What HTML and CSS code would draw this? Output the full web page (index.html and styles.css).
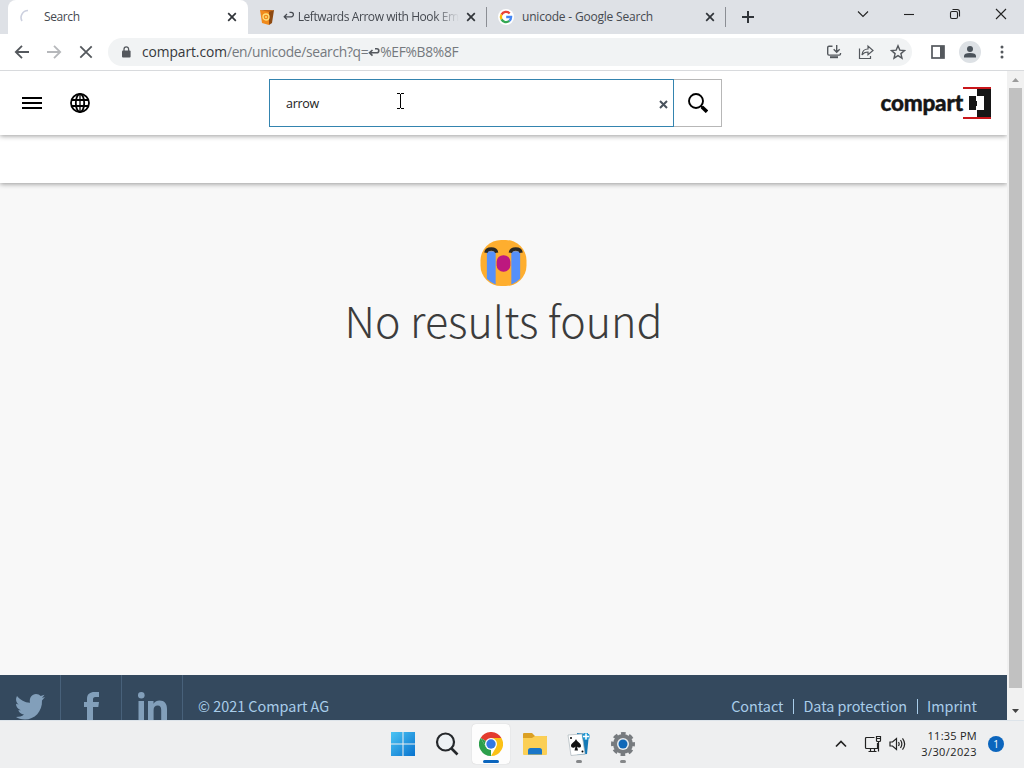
FILE: index.html
```html
<!DOCTYPE html>
<html lang="en">
<head>
    <meta charset="UTF-8">
    <meta name="viewport" content="width=device-width, initial-scale=1.0">
    <title>Search</title>
    <link rel="stylesheet" href="styles.css">
</head>
<body>
    <div class="tab-strip">
        <div class="tab active">
            <svg class="favicon" width="16" height="16" viewBox="0 0 16 16"><path d="M2 12A7 7 0 0 1 8 1.5" fill="none" stroke="#ccd0df" stroke-width="1.6"/></svg>
            <span class="tab-title">Search</span>
            <svg class="tab-close" width="10" height="10" viewBox="0 0 10 10"><path d="M1.2 1.2l7.6 7.6M8.8 1.2L1.2 8.8"/></svg>
        </div>
        <div class="tab second">
            <svg class="favicon" width="16" height="17" viewBox="0 0 16 17"><path d="M1 1l9 1v14l-7-2z" fill="#f08a1c"/><path d="M10 2l5-1-2 13-3 2z" fill="#8e4a12"/><path d="M1 1l14 0-5 2z" fill="#c86a18"/><circle cx="7" cy="8" r="3" fill="none" stroke="#ffe07a" stroke-width="1.3"/><circle cx="7" cy="8" r="1" fill="#ffe07a"/></svg>
            <span class="tab-title fade"><svg width="12" height="10" viewBox="0 0 12 10"><path d="M4 3L1.2 5.8 4 8.5M1.5 5.8h6.7a2.2 2.2 0 0 0 0-4.4H6.5" fill="none" stroke="#454950" stroke-width="1.2"/></svg> Leftwards Arrow with Hook Em</span>
            <svg class="tab-close" width="10" height="10" viewBox="0 0 10 10"><path d="M1.2 1.2l7.6 7.6M8.8 1.2L1.2 8.8"/></svg>
        </div>
        <div class="tab third">
            <svg class="favicon" width="16" height="16" viewBox="0 0 16 16"><circle cx="8" cy="8" r="8" fill="#fff"/><g fill="none" stroke-width="2.3"><path d="M11.7 4.4A5.1 5.1 0 0 0 3.5 5.6" stroke="#ea4335"/><path d="M3.5 5.6a5.1 5.1 0 0 0 0 4.8" stroke="#fbbc05"/><path d="M3.5 10.4a5.1 5.1 0 0 0 7.8 1.5" stroke="#34a853"/><path d="M11.3 11.9A5.1 5.1 0 0 0 13.1 8H8.2" stroke="#4285f4"/></g></svg>
            <span class="tab-title">unicode - Google Search</span>
            <svg class="tab-close" width="10" height="10" viewBox="0 0 10 10"><path d="M1.2 1.2l7.6 7.6M8.8 1.2L1.2 8.8"/></svg>
        </div>
        <svg class="new-tab" width="12" height="12" viewBox="0 0 12 12"><path d="M6 0v12M0 6h12"/></svg>
        <div class="window-controls">
            <svg width="12" height="12" viewBox="0 0 12 12"><path d="M1 3.5l5 5 5-5"/></svg>
            <svg width="12" height="12" viewBox="0 0 12 12"><path d="M1 6.5h10"/></svg>
            <svg width="12" height="12" viewBox="0 0 12 12"><rect x="1.5" y="3.5" width="7" height="7" rx="1.5"/><path d="M3.5 1.5h4.7a2.3 2.3 0 0 1 2.3 2.3v4.7"/></svg>
            <svg width="12" height="12" viewBox="0 0 12 12"><path d="M1 1l10 10M11 1L1 11"/></svg>
        </div>
    </div>

    <div class="toolbar">
        <div class="nav-buttons">
            <svg width="16" height="16" viewBox="0 0 16 16"><path d="M15 8H2M8 1.8L1.8 8 8 14.2"/></svg>
            <svg class="disabled" width="16" height="16" viewBox="0 0 16 16"><path d="M1 8h13M8 1.8L14.2 8 8 14.2"/></svg>
            <svg width="16" height="16" viewBox="0 0 16 16"><path d="M2.3 2.3l11.4 11.4M13.7 2.3L2.3 13.7"/></svg>
        </div>
        <div class="address-bar">
            <svg class="lock" width="10" height="12" viewBox="0 0 10 12"><rect x="1" y="4.5" width="8.6" height="7" rx="1" fill="#54585d"/><path d="M3 5V3.2a2.3 2.3 0 0 1 4.6 0V5" fill="none" stroke="#54585d" stroke-width="1.3"/></svg>
            <span class="url"><b>compart.com</b>/en/unicode/search?q=<svg width="12" height="10" viewBox="0 0 12 10"><path d="M4.5 3L1.5 5.8l3 2.8M1.8 5.8h7a2 2 0 0 0 0-4H7" fill="none" stroke="#55595e" stroke-width="1.6"/></svg>%EF%B8%8F</span>
            <div class="page-actions">
                <svg width="16" height="16" viewBox="0 0 16 16"><path d="M6.5 2.2H3Q1.7 2.2 1.7 3.5v6.3q0 1.3 1.3 1.3h10.3q1.2 0 1.2-1.3V9M10.7 1v7M7.7 5.3l3 3 3-3"/><path d="M4 13.2h8" stroke-width="2"/></svg>
                <svg width="16" height="16" viewBox="0 0 16 16"><path d="M1.5 4.5v10h11V12M4 11c.3-4 2.5-6 6-6V2l5 4.5-5 4.3V8C7.5 8 5.5 8.7 4 11z" stroke-width="1.2"/></svg>
                <svg width="16" height="16" viewBox="0 0 16 16"><path d="M8 1.8l1.8 4.3 4.7.4-3.6 3.1 1.1 4.6-4-2.5-4 2.5 1.1-4.6-3.6-3.1 4.7-.4z"/></svg>
            </div>
        </div>
        <svg class="side-panel" width="14" height="14" viewBox="0 0 14 14"><rect x="1" y="1" width="12" height="12" fill="none" stroke="#54585d" stroke-width="1.7"/><path d="M9 1h4v12H9z" fill="#54585d"/></svg>
        <svg class="profile" width="22" height="22" viewBox="0 0 22 22"><circle cx="11" cy="11" r="11" fill="#dde1e5"/><circle cx="11" cy="8" r="3" fill="#4b535b"/><path d="M5 16.5v-1.5q0-3 6-3t6 3v1.5z" fill="#4b535b"/></svg>
        <svg class="menu-dots" width="4" height="14" viewBox="0 0 4 14"><circle cx="2" cy="2" r="1.5"/><circle cx="2" cy="7" r="1.5"/><circle cx="2" cy="12" r="1.5"/></svg>
    </div>

    <div class="viewport">
        <div class="page">
            <header class="site-header">
                <svg class="hamburger" width="20" height="12" viewBox="0 0 20 12"><path d="M0 1h20M0 6h20M0 11h20" stroke="#000" stroke-width="2"/></svg>
                <svg class="globe" width="20" height="20" viewBox="0 0 20 20"><g fill="none" stroke="#000" stroke-width="1.8"><circle cx="10" cy="10" r="9"/><ellipse cx="10" cy="10" rx="4.2" ry="9"/><path d="M1.8 7h16.4M1.8 13h16.4"/><path d="M10 1v18" stroke-width="1.3"/></g></svg>
                <form class="search">
                    <div class="search-field">
                        <span>arrow</span>
                        <svg class="caret" width="7" height="16" viewBox="0 0 7 16"><path d="M0 .5h3M4 .5h3M3.5 1v14M0 15.5h3M4 15.5h3"/></svg>
                        <svg class="clear" width="9" height="9" viewBox="0 0 9 9"><path d="M1 1l7 7M8 1L1 8"/></svg>
                    </div>
                    <div class="search-button">
                        <svg width="20" height="20" viewBox="0 0 20 20"><circle cx="8" cy="8" r="7" fill="none" stroke="#000" stroke-width="1.9"/><path d="M13 13l1.5 1.5" stroke="#000" stroke-width="2"/><path d="M14 14l5 4.8" stroke="#000" stroke-width="3.6"/></svg>
                    </div>
                </form>
                <div class="logo">
                    <span>compart</span>
                    <svg width="28" height="32" viewBox="0 0 28 32"><path d="M14 1h14v30H14z" fill="#161616"/><path d="M6 9h7v14H6z" fill="#161616"/><path d="M13 9h8v14h-8z" fill="#fff"/><path d="M11 14h3v5h-3z" fill="#161616"/><path d="M0 0h28v2H0zM0 30h28v2H0z" fill="#c9161b"/></svg>
                </div>
            </header>
            <div class="sub-header"></div>
            <main class="content">
                <svg class="crying" width="47" height="48" viewBox="0 0 48 48"><rect x=".5" y=".5" width="47" height="47" rx="21" fill="#feae2f"/><path d="M7 12h9v34q-5-2-9-6zM32 12h9v28q-4 4-9 6z" fill="#5590fa"/><path d="M6 13.5c1-5 10-5 11 0M31 13.5c1-5 10-5 11 0" fill="none" stroke="#2b2823" stroke-width="3.5"/><rect x="17" y="16" width="14" height="17" rx="6.8" fill="#bd187f"/></svg>
                <h1>No results found</h1>
            </main>
            <footer class="site-footer">
                <div class="social">
                    <svg width="30" height="26" viewBox="0 0 30 26"><path d="M30 3l-3 3.5c.5 11-7.5 19-17 19-4 0-7-1-9-2.500 3 0 6-.7 8-2.500-3-.2-5-2-5.700-4.200h2.500C2.500 15 1 12.500 1 9.800l2.700.8C1 8.500.3 5 2 2c3.500 4 7.500 6.500 13 6.800C14 3.500 17 0 21 0c2 0 3.500.7 4.700 2L29.500.7 27 4z"/></svg>
                </div>
                <div class="social">
                    <svg width="16" height="29" viewBox="0 0 16 29"><path d="M4 29V15H1v-5h3V7c0-5 3-7 7.500-7H16v5h-3.500c-2 0-2.500 1-2.500 2.500V10h6l-.7 5H10v14z"/></svg>
                </div>
                <div class="social">
                    <svg width="29" height="29" viewBox="0 0 29 29"><circle cx="3.3" cy="3.3" r="3.3"/><path d="M.5 9H6v20H.5zM10 9h5.500v2.700C17 9.500 19 8.500 21.500 8.500c5 0 7.500 3 7.500 8.500v12h-5.800V18c0-3-1-4.500-3.500-4.500-2.700 0-4.100 1.700-4.100 4.500v11H10z"/></svg>
                </div>
                <span class="copyright">© 2021 Compart AG</span>
                <nav class="footer-links"><span>Contact</span><i></i><span>Data protection</span><i></i><span>Imprint</span></nav>
            </footer>
        </div>
        <div class="scrollbar">
            <svg width="7" height="4" viewBox="0 0 7 4"><path d="M0 4l3.5-4L7 4z" fill="#9b9b9b"/></svg>
            <div class="thumb"></div>
            <svg width="7" height="4" viewBox="0 0 7 4"><path d="M0 0h7L3.5 4z" fill="#444"/></svg>
        </div>
    </div>

    <div class="taskbar">
        <div class="apps">
            <div class="app"><svg width="24" height="24" viewBox="0 0 24 24"><defs><linearGradient id="win" x2="1" y2="1"><stop stop-color="#4cc5f4"/><stop offset="1" stop-color="#0872ce"/></linearGradient></defs><path d="M0 0h11.500v11.500H0zM12.500 0H24v11.500H12.500zM0 12.500h11.500V24H0zM12.500 12.500H24V24H12.500z" fill="url(#win)"/></svg></div>
            <div class="app"><svg width="24" height="24" viewBox="0 0 24 24"><circle cx="10.5" cy="10" r="8.5" fill="#eef2f5" stroke="#25282b" stroke-width="2.2"/><path d="M16.5 16.5l6 6" stroke="#25282b" stroke-width="2.6"/></svg></div>
            <div class="app open current"><svg width="24" height="24" viewBox="0 0 24 24"><path d="M12 12L1.600 6A12 12 0 0 1 22.400 6z" fill="#e33b2e"/><path d="M12 12v12A12 12 0 0 1 1.600 6L7 15z" fill="#2c9f4b"/><path d="M12 12L1.600 6 7 15l5-3z" fill="#2c9f4b"/><path d="M12 6h10.400A12 12 0 0 1 12 24l5.200-9z" fill="#fbc116"/><circle cx="12" cy="12" r="6" fill="#fff"/><circle cx="12" cy="12" r="4.7" fill="#3478e5"/></svg></div>
            <div class="app"><svg width="24" height="24" viewBox="0 0 24 24"><path d="M0 2q0-1 1-1h8l3 3h11q1 0 1 1v10H0z" fill="#dba024"/><path d="M0 6h9l3-2h11q1 0 1 1v17q0 1-1 1H1q-1 0-1-1z" fill="#fbcf55"/><path d="M5 22.500v-4q0-2.500 2.500-2.500h9q2.500 0 2.500 2.500v4z" fill="#1976c8"/></svg></div>
            <div class="app open"><svg width="24" height="24" viewBox="0 0 24 24"><path d="M10 1l12 1-2 20-10 1z" fill="#1479b6"/><path d="M1 3l14-1 3 20-14 1.500z" fill="#fff" stroke="#a9b4ba" stroke-width=".7"/><path d="M9 7c1 3 5 4 5 7 0 2-3 2-4 .5l1 4H7.500l1-4C7 16.500 4 16 4 13.800 4 11 8 10 9 7z" fill="#111"/><circle cx="4" cy="6" r="1"/><circle cx="15.5" cy="19.5" r="1"/><path d="M19 1v7M15.500 4.500h7" stroke="#209bd7" stroke-width="4"/><path d="M19 1.500v6M16 4.500h6" stroke="#fff" stroke-width="1.6"/></svg></div>
            <div class="app open"><svg width="24" height="24" viewBox="0 0 24 24"><g fill="none" stroke="#777b7f"><circle cx="12" cy="12" r="7.5" stroke-width="5"/><circle cx="12" cy="12" r="10.5" stroke-width="3" stroke-dasharray="4.6 3.646" stroke-dashoffset="2.3"/></g><circle cx="12" cy="12" r="6" fill="#e8edf0"/><circle cx="12" cy="12" r="4.5" fill="#1068b8"/></svg></div>
        </div>
        <div class="tray">
            <svg class="chevron" width="12" height="8" viewBox="0 0 12 8"><path d="M1 6.5l5-5 5 5"/></svg>
            <svg class="network" width="18" height="18" viewBox="0 0 18 18"><path d="M10.500 2.500h-8Q1.500 2.500 1.500 3.500v9q0 1 1 1h11V8M4.500 16.500h8M6.500 13.500v3M10.500 13.500v3M12.500 1.500h4v4q0 1-1 1h-2q-1 0-1-1zM12.500 3.500h4M14.500 6.500v10"/></svg>
            <svg class="volume" width="17" height="14" viewBox="0 0 17 14"><path d="M1 5h2.500L7.500 1.500v11L3.500 9H1zM9.500 5q1.300 2 0 4M11.500 3q2.700 4 0 8M13.500 1.300q4.300 5.700 0 11.400"/></svg>
            <div class="clock">11:35 PM<br><span>3/30/2023</span></div>
            <div class="badge">1</div>
        </div>
    </div>
</body>
</html>
```
FILE: styles.css
```css
* { box-sizing: border-box; }
body { margin: 0; width: 1024px; height: 768px; overflow: hidden; display: flex; flex-direction: column; font-family: "Open Sans", "Noto Sans", sans-serif; background: #fff; }
svg { display: block; flex: none; }

/* Browser tabs */
.tab-strip { height: 34px; background: #dee1e6; display: flex; align-items: center; flex: none; }
.tab { display: flex; align-items: center; height: 34px; font-size: 12px; color: #454950; white-space: nowrap; }
.tab-title { flex: 1; padding-bottom: 1px; }
.tab-title svg { display: inline-block; }
.fade { -webkit-mask-image: linear-gradient(to right, #000 86%, transparent); mask-image: linear-gradient(to right, #000 86%, transparent); letter-spacing: -0.43px; }
.tab-close { stroke: #303439; stroke-width: 1.7; fill: none; }
.active { width: 240px; margin-left: 8px; padding: 0 11px 0 12px; background: #fff; border-radius: 8px 8px 0 0; }
.active .tab-title { margin-left: 8px; letter-spacing: -0.4px; }
.second { width: 239px; padding: 0 10px 0 11px; border-right: 1px solid #8b8e94; height: 20px; }
.second .tab-title { margin: 0 7px 0 8px; }
.third { width: 239px; padding: 0 10px 0 11px; border-right: 1px solid #8b8e94; height: 20px; }
.third .tab-title { margin-left: 8px; letter-spacing: -0.2px; }
.new-tab { margin-left: 16px; stroke: #303439; stroke-width: 2; }
.window-controls { display: flex; gap: 34px; margin-left: auto; padding: 0 17px 6px 0; }
.window-controls svg { stroke: #222; stroke-width: 1.1; fill: none; }

/* Address row */
.toolbar { height: 37px; flex: none; display: flex; align-items: center; border-bottom: 1px solid #d8dadd; background: #fff; }
.nav-buttons { display: flex; gap: 16px; margin-left: 14px; }
.nav-buttons svg { stroke: #54585d; stroke-width: 1.8; fill: none; }
.nav-buttons .disabled { stroke: #b6b8bb; }
.address-bar { height: 28px; width: 804px; margin-left: 14px; padding: 0 6px 0 13px; border-radius: 14px; background: #f1f3f4; display: flex; align-items: center; }
.url { margin: -2px 0 0 11px; font-size: 13.8px; color: #75797e; letter-spacing: -0.31px; white-space: nowrap; }
.url b { color: #35383c; font-weight: normal; letter-spacing: -0.07px; }
.url svg { display: inline-block; }
.page-actions { display: flex; gap: 16px; margin-left: auto; }
.page-actions svg { fill: none; stroke: #54585d; stroke-width: 1.4; }
.side-panel { margin-left: 19px; }
.profile { margin-left: 14px; }
.menu-dots { margin-left: 19px; fill: #54585d; }

/* Page */
.viewport { height: 649px; flex: none; display: flex; }
.page { width: 1007px; display: flex; flex-direction: column; background: #f8f8f8; overflow: hidden; }
.site-header { height: 64px; flex: none; display: flex; align-items: center; padding: 0 16px 0 22px; background: #fff; box-shadow: 0 1px 5px rgba(0,0,0,0.4); z-index: 2; }
.globe { margin-left: 28px; }
.search { display: flex; width: 453px; height: 48px; margin-left: 179px; }
.search-field { width: 405px; border: 1px solid #3484af; display: flex; align-items: center; padding: 0 5px 0 16px; font-size: 12.5px; letter-spacing: -0.3px; color: #222; }
.caret { margin: -5px 0 0 78px; stroke: #000; stroke-width: 1; }
.clear { margin: 2px 0 0 auto; stroke: #49525c; stroke-width: 2; }
.search-button { flex: 1; border: 1px solid #b7b7b7; border-left: none; display: flex; align-items: center; justify-content: center; }
.logo { margin-left: auto; display: flex; align-items: center; font-family: Lato, sans-serif; font-weight: 900; font-size: 22.5px; letter-spacing: -0.2px; color: #161616; -webkit-text-stroke: 0.4px #161616; }
.logo span { margin-top: -2px; }
.sub-header { height: 48px; flex: none; background: #fff; box-shadow: 0 1px 5px rgba(0,0,0,0.4); z-index: 1; }
.content { flex: 1; display: flex; flex-direction: column; align-items: center; padding-top: 56px; }
.content h1 { margin: 0; font-family: "Noto Sans CJK SC Light", "Noto Sans CJK SC", sans-serif; font-size: 43px; font-weight: 200; line-height: 65px; color: #3c3c3c; white-space: nowrap; }
.site-footer { height: 45px; flex: none; display: flex; background: #34495e; color: #a9cdea; font-family: "Noto Sans CJK SC", sans-serif; font-size: 14.4px; line-height: 62px; overflow: hidden; }
.social { width: 61px; border-right: 1px solid #48617a; display: flex; justify-content: center; padding-top: 17px; fill: #829fba; }
.social:first-child svg { margin-top: 2px; }
.copyright { margin-left: 15px; }
.footer-links { margin-left: auto; margin-right: 30px; display: flex; letter-spacing: -0.04px; }
.footer-links i { width: 1px; height: 15px; margin: 24px 9px 0 10px; background: #a9cdea; }

/* Scrollbar */
.scrollbar { width: 17px; background: #f1f1f1; display: flex; flex-direction: column; align-items: center; padding: 7px 0; }
.thumb { width: 13px; height: 600px; margin: 6px 0 auto; background: #c1c1c1; }

/* Taskbar */
.taskbar { height: 48px; flex: none; display: flex; align-items: center; background: #eeeff0; border-top: 1px solid #dde4ea; padding-bottom: 1px; }
.apps { display: flex; gap: 6px; margin-left: 384px; }
.app { width: 38px; height: 40px; border-radius: 4px; display: flex; align-items: center; justify-content: center; position: relative; }
.current { background: #fdfdfd; box-shadow: 0 0 1px #bbb; }
.open::after { content: ""; position: absolute; left: 16px; bottom: 1px; width: 6px; height: 3px; border-radius: 2px; background: #858789; }
.current::after { left: 11px; width: 16px; background: #0b65bd; }
.tray { display: flex; align-items: center; margin-left: auto; padding-right: 20px; }
.tray svg { fill: none; stroke: #222; stroke-width: 1.2; }
.tray .chevron { stroke-width: 1.7; }
.network { margin-left: 17px; }
.volume { margin-left: 7px; }
.clock { width: 64px; margin-left: 7px; text-align: right; font-size: 11px; line-height: 16px; color: #222; letter-spacing: 0.25px; }
.clock span { letter-spacing: 0.4px; }
.badge { width: 16px; height: 16px; margin-left: 11px; border-radius: 50%; background: #0b65bd; color: #fff; font-size: 10px; line-height: 16px; text-align: center; }
```
